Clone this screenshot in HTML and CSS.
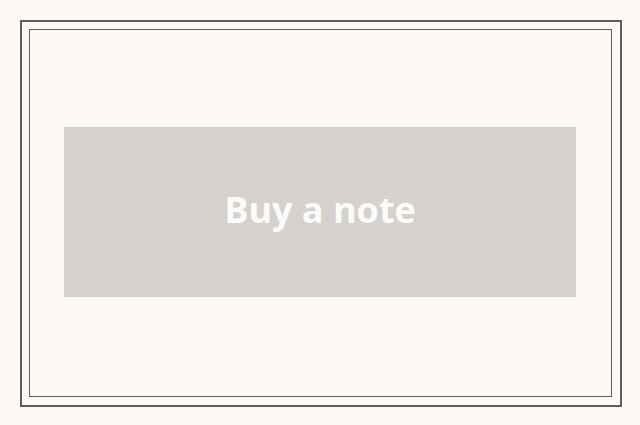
FILE: index.html
```html
<!DOCTYPE html>
<html lang="en">
<head>
    <meta charset="UTF-8">
    <meta name="viewport" content="width=device-width, initial-scale=1.0">
    <title>Buy a note</title>
    <link rel="stylesheet" href="styles.css">
</head>
<body>
    <div class="frame">
        <div class="frame-inner">
            <button class="buy-button" disabled>Buy a note</button>
        </div>
    </div>
</body>
</html>
```

FILE: styles.css
```css
* {
    margin: 0;
    padding: 0;
    box-sizing: border-box;
}

body {
    background: #fff9f5;
    font-family: 'Open Sans', 'Noto Sans', sans-serif;
    padding: 20px;
}

.frame {
    width: 602px;
    height: 387px;
    border: 2px solid #5f5c5a;
    padding: 7px 8px 8px 7px;
}

.frame-inner {
    height: 100%;
    border: 1px solid #5f5c5a;
    padding-left: 34px;
    display: flex;
    align-items: center;
}

.buy-button {
    width: 512px;
    height: 170px;
    border: none;
    background: #d4d1ce;
    color: #fdfbf9;
    font-family: inherit;
    font-size: 36px;
    font-weight: 700;
    padding-bottom: 6px;
    margin-top: -2px;
}
```
